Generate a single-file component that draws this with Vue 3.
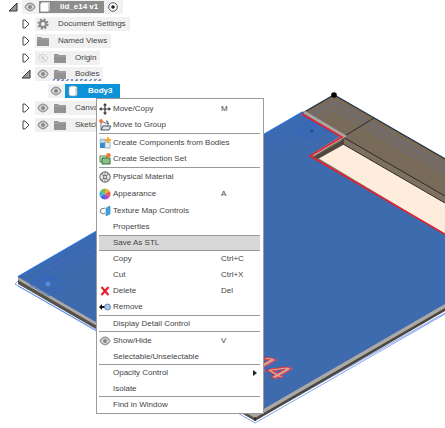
<script setup>
const tree = [
  { label: 'Document Settings', icon: 'gear', arrow: 'closed' },
  { label: 'Named Views', icon: 'folder', arrow: 'closed' },
  { label: 'Origin', icon: 'folder', arrow: 'closed', eye: 'off' },
  { label: 'Bodies', icon: 'folder', arrow: 'open', eye: 'on', active: true },
  { label: 'Body3', icon: 'body', eye: 'on', selected: true },
  { label: 'Canvases', icon: 'folder', arrow: 'closed', eye: 'on' },
  { label: 'Sketches', icon: 'folder', arrow: 'closed', eye: 'on' },
]

const menu = [
  { label: 'Move/Copy', key: 'M', icon: 'move', tall: true },
  { label: 'Move to Group', icon: 'group', tall: true, line: true },
  { label: 'Create Components from Bodies', icon: 'component', tall: true },
  { label: 'Create Selection Set', icon: 'set', tall: true, line: true },
  { label: 'Physical Material', icon: 'material', tall: true },
  { label: 'Appearance', key: 'A', icon: 'appearance', tall: true },
  { label: 'Texture Map Controls', icon: 'texture', tall: true },
  { label: 'Properties' },
  { label: 'Save As STL', hover: true },
  { label: 'Copy', key: 'Ctrl+C' },
  { label: 'Cut', key: 'Ctrl+X' },
  { label: 'Delete', key: 'Del', icon: 'delete' },
  { label: 'Remove', icon: 'remove', tall: true, line: true },
  { label: 'Display Detail Control', line: true },
  { label: 'Show/Hide', key: 'V', icon: 'eye', tall: true },
  { label: 'Selectable/Unselectable', line: true },
  { label: 'Opacity Control', sub: true },
  { label: 'Isolate', line: true },
  { label: 'Find in Window' },
]
</script>

<template>
  <main class="page">
    <svg class="scene" viewBox="0 0 445 428" preserveAspectRatio="xMinYMin slice" aria-hidden="true">
      <g fill="none" stroke="#4d7fe6">
        <path d="M18 281l-3 3 240 139 190-109" stroke-width=".7" />
        <path d="M18 286l237 134 190-107" stroke-width=".7" />
      </g>
      <path d="M18 278v6l237 137v-6z" fill="#55514c" />
      <path d="M255 415v6l190-110v-6z" fill="#4b4743" />
      <path d="M18 277v3l237 138 190-110v-4z" fill="#aaa9a5" />
      <path d="M18 277L334 94 445 158V304L255 414z" fill="#3e6aae" />
      <path d="M18 277L303 112" fill="none" stroke="#2e6fd0" stroke-width="2" />
      <g fill="none" stroke="#2f63cc" stroke-width=".7">
        <path d="M28 277L310 115M33 280L320 115M42 283L316 124" />
        <path d="M30 285l19-11 18 11-18 11zM296 131l15-9 17 9-15 9z" />
        <ellipse cx="48" cy="284" rx="10" ry="6" />
        <ellipse cx="312" cy="131" rx="8" ry="5" />
      </g>
      <circle cx="48" cy="284" r="2.4" fill="#538ee6" />
      <circle cx="312" cy="131" r="1.6" fill="#174b9b" />
      <path d="M303 113L334 95 445 159V234L343 137z" fill="#796b59" />
      <g fill="none" stroke="#626e9b" stroke-width=".8">
        <path d="M309 115l25-14 111 64M312 117l22-13 111 65M316 121l18-11 111 64" />
      </g>
      <path d="M343 137L445 196V234L310 156z" fill="#7c7161" />
      <path d="M343 144L445 203V234L318 158z" fill="#feecdc" />
      <path d="M343 140v5l-25 14-5-2z" fill="#50483e" />
      <path d="M303 113L334 95 445 159M374 118L343 137 445 196M343 137v7M343 144L445 203" fill="none" stroke="#302b25" />
      <path d="M304 112L344 136 313 155" fill="none" stroke="#aaa6a1" stroke-width="3" />
      <path d="M302 114L342 137 310 156 445 234" fill="none" stroke="#ef1d29" stroke-width="1.5" />
      <circle cx="334" cy="95" r="2.8" fill="#050505" />
      <path d="M255 417v4" stroke="#111" />
      <text class="engraving" transform="matrix(.87 .5 -.87 .5 277 380)">e14</text>
    </svg>

    <nav class="tree" aria-label="Browser">
      <div class="row root">
        <svg class="arrow" viewBox="0 0 10 10"><path d="M9 1v8H1z" fill="#999" stroke="#333" /></svg>
        <div class="chip">
          <svg class="icon" viewBox="0 0 12 12"><path d="M1 6c3-5 7-5 10 0-3 5-7 5-10 0z" fill="#ddd" stroke="#999" stroke-width="1.3" /><circle cx="6" cy="6" r="2" fill="#888" /></svg>
          <button class="title">
            <svg class="icon" viewBox="0 0 12 12"><path d="M1 3l2-2h8v8l-2 2H1z" fill="#fff" stroke="#777" stroke-width=".7" /><path d="M9 11V3l2-2v8z" fill="#ccc" /></svg>
            <span>lid_e14 v1</span>
          </button>
          <svg class="icon" viewBox="0 0 12 12"><circle cx="6" cy="6" r="4.3" fill="#fff" stroke="#444" stroke-width=".9" /><circle cx="6" cy="6" r="1.8" fill="#222" /></svg>
        </div>
      </div>

      <div v-for="n in tree" :key="n.label" class="row" :class="{ child: n.selected }">
        <svg v-if="n.arrow === 'closed'" class="arrow" viewBox="0 0 10 10"><path d="M2 1v8h2l4-4-4-4z" fill="#fff" stroke="#444" /></svg>
        <svg v-else-if="n.arrow === 'open'" class="arrow" viewBox="0 0 10 10"><path d="M9 1v8H1z" fill="#999" stroke="#333" /></svg>
        <div class="chip" :class="{ active: n.active, selected: n.selected }">
          <svg v-if="n.eye === 'on'" class="icon" viewBox="0 0 12 12"><path d="M1 6c3-5 7-5 10 0-3 5-7 5-10 0z" fill="#ddd" stroke="#999" stroke-width="1.3" /><circle cx="6" cy="6" r="2" fill="#888" /></svg>
          <svg v-else-if="n.eye === 'off'" class="icon" viewBox="0 0 12 12"><path d="M1 6c3-5 7-5 10 0-3 5-7 5-10 0zM2 2l8 8" fill="none" stroke="#d2d2d2" /><circle cx="6" cy="6" r="1.6" fill="#d2d2d2" /></svg>
          <button class="node">
            <svg v-if="n.icon === 'gear'" class="icon" viewBox="0 0 12 12"><circle cx="6" cy="6" r="4.6" fill="none" stroke="#888" stroke-width="2" stroke-dasharray="2 1.61" /><circle cx="6" cy="6" r="3" fill="none" stroke="#888" stroke-width="2" /></svg>
            <svg v-else-if="n.icon === 'folder'" class="icon" viewBox="0 0 12 12"><path d="M0 2h4l1 1h7v8H0z" fill="#929292" /><path d="M0 4h12" stroke="#b8b8b8" stroke-width=".6" /></svg>
            <svg v-else class="icon" viewBox="0 0 12 12"><path d="M2 2.5c0-2 8-2 8 0v7c0 2-8 2-8 0z" fill="#fff" stroke="#9aa" stroke-width=".7" /><path d="M8 3.5l2-1v7l-2 1z" fill="#d7d7d7" /></svg>
            <span>{{ n.label }}</span>
          </button>
        </div>
      </div>
    </nav>

    <div class="menu" role="menu">
      <button v-for="m in menu" :key="m.label" class="item" :class="{ tall: m.tall, line: m.line, hover: m.hover }" role="menuitem">
        <svg class="glyph" viewBox="0 0 12 12">
          <g v-if="m.icon === 'move'" fill="#333"><path d="M6 0l2 2.5H4zM6 12L4 9.500h4zM0 6l2.500-2v4zM12 6L9.500 4v4z" /><path d="M5.400 2h1.200v8H5.400zM2 5.400h8v1.200H2z" /></g>
          <g v-else-if="m.icon === 'group'"><path d="M2 11V3h3l1 1h3v3" fill="#eee" stroke="#556" stroke-width=".8" /><path d="M2 11l2-4h8l-2 4z" fill="#d9e5ee" stroke="#345" stroke-width=".9" /><path d="M7 2c2 0 2 1 2 3" fill="none" stroke="#345" /><circle cx="2" cy="2" r="1.900" fill="#f07830" /></g>
          <g v-else-if="m.icon === 'component'"><path d="M1 2h5v4H1z" fill="#b9d9f2" stroke="#79a9cc" stroke-width=".6" /><path d="M1 6h5v5H1z" fill="#3889cc" /><path d="M6 5h5v6H6z" fill="#e4eef5" stroke="#7c98ab" stroke-width=".7" /><path d="M9 0v6M6 3h6" stroke="#f5a52b" stroke-width="1.800" /></g>
          <g v-else-if="m.icon === 'set'"><path d="M1 3h7v6H1z" fill="#d7ead4" stroke="#4b8d48" /><path d="M3 5h8v6H3z" fill="#8dbf87" stroke="#2f7434" /><circle cx="9.500" cy="2.300" r="2.200" fill="#f07830" /></g>
          <g v-else-if="m.icon === 'material'" fill="none" stroke="#555"><circle cx="6" cy="6" r="5.200" fill="#eee" stroke-width=".9" /><path d="M2 3l8 6M10 3L2 9M6 1v10M3 2l6 8M9 2l-6 8" stroke-width=".6" /><circle cx="6" cy="6" r="1.500" fill="#fff" stroke-width=".8" /></g>
          <g v-else-if="m.icon === 'appearance'"><path d="M6 6L6 .500A5.500 5.500 0 0 1 10.800 3.300z" fill="#f7a43b" /><path d="M6 6l4.800-2.700a5.500 5.500 0 0 1 0 5.400z" fill="#ed5848" /><path d="M6 6l4.800 2.700A5.500 5.500 0 0 1 6 11.500z" fill="#b64bc4" /><path d="M6 6v5.500A5.500 5.500 0 0 1 1.200 8.700z" fill="#426be0" /><path d="M6 6L1.200 8.700a5.500 5.500 0 0 1 0-5.400z" fill="#31b8cf" /><path d="M6 6L1.200 3.300A5.500 5.500 0 0 1 6 .500z" fill="#69c256" /></g>
          <g v-else-if="m.icon === 'texture'"><path d="M6 3L2 4 1 7l3 2 2-1" fill="#fff" stroke="#777" /><path d="M7 3l4-2v8l-4 2z" fill="#42a4df" stroke="#2c7fb6" stroke-width=".6" /></g>
          <path v-else-if="m.icon === 'delete'" d="M2.500 2l7 8M9.500 2l-7 8" stroke="#e3202b" stroke-width="2.200" />
          <g v-else-if="m.icon === 'remove'"><path d="M0 6l3-3v2h3v2H3v2z" fill="#111" /><circle cx="8.500" cy="6" r="3" fill="#a9c8ee" stroke="#4b6f9f" stroke-width=".8" /></g>
          <g v-else-if="m.icon === 'eye'"><path d="M1 6c3-5 7-5 10 0-3 5-7 5-10 0z" fill="#ddd" stroke="#999" stroke-width="1.300" /><circle cx="6" cy="6" r="2" fill="#888" /></g>
        </svg>
        <span class="label">{{ m.label }}</span>
        <span class="key">{{ m.key }}</span>
        <svg v-if="m.sub" class="more" viewBox="0 0 4 6"><path d="M0 0l4 3-4 3z" fill="#222" /></svg>
      </button>
    </div>
  </main>
</template>

<style>
body {
  margin: 0;
  background: #fff;
}
</style>

<style scoped>
.page {
  position: relative;
  min-height: 100vh;
  overflow: hidden;
  font: 8px/12px "Liberation Sans", Arial, sans-serif;
  color: #444;
}
.scene {
  position: absolute;
  inset: 0;
  width: 100%;
  height: 100%;
}
.engraving {
  font: bold 28px "Liberation Sans", Arial, sans-serif;
  text-anchor: end;
  fill: #c9a79e;
  stroke: #ee2b35;
  stroke-width: 1px;
}
button {
  border: 0;
  padding: 0;
  background: none;
  font: inherit;
  color: inherit;
  text-align: left;
  white-space: nowrap;
}
svg {
  flex: none;
}
.tree {
  position: relative;
  display: grid;
  grid-template-rows: repeat(8, 1fr);
  height: 134px;
  margin-top: -1px;
}
.row {
  display: flex;
  align-items: center;
  gap: 4px;
  padding-left: 21px;
}
.row.root {
  padding-left: 8px;
}
.row.child {
  padding-left: 48px;
}
.arrow {
  width: 10px;
  height: 10px;
}
.icon {
  width: 12px;
  height: 12px;
}
.chip {
  display: flex;
  align-items: center;
  gap: 5px;
  height: 14px;
  padding: 0 4px 0 2px;
  background: #f1f1f1;
}
.title,
.node {
  display: flex;
  align-items: center;
  gap: 9px;
  height: 14px;
}
.root .chip {
  gap: 3px;
}
.title {
  height: 12px;
  padding-right: 6px;
  background: #8d8d8d;
  color: #fff;
  font-weight: bold;
}
.chip.active {
  background: repeating-linear-gradient(120deg, #7f94bd 0 2px, #f1f1f1 2px 4px) 18px 100% / 100% 2px no-repeat #f1f1f1;
}
.chip.selected {
  gap: 3px;
  padding-right: 0;
}
.selected .node {
  padding: 0 8px 0 2px;
  background: #0f93d8;
  color: #fff;
  font-weight: bold;
}
.menu {
  position: absolute;
  left: 96px;
  top: 98px;
  display: flex;
  flex-direction: column;
  box-sizing: border-box;
  width: 168px;
  padding: 1px 3px 0 2px;
  border: 1px solid #9b9b9b;
  background: #fff;
}
.item {
  display: grid;
  grid-template-columns: 12px 106px 1fr auto;
  column-gap: 2px;
  align-items: center;
  box-sizing: border-box;
  height: 16px;
  padding-right: 3px;
}
.item.tall {
  height: 17px;
}
.item.line {
  border-bottom: 1px solid #999;
}
.item.hover {
  border-top: 1px solid #999;
  border-bottom: 1px solid #999;
  background: #d8d8d8;
}
.glyph {
  width: 12px;
  height: 12px;
}
.more {
  width: 4px;
  height: 6px;
}
</style>
